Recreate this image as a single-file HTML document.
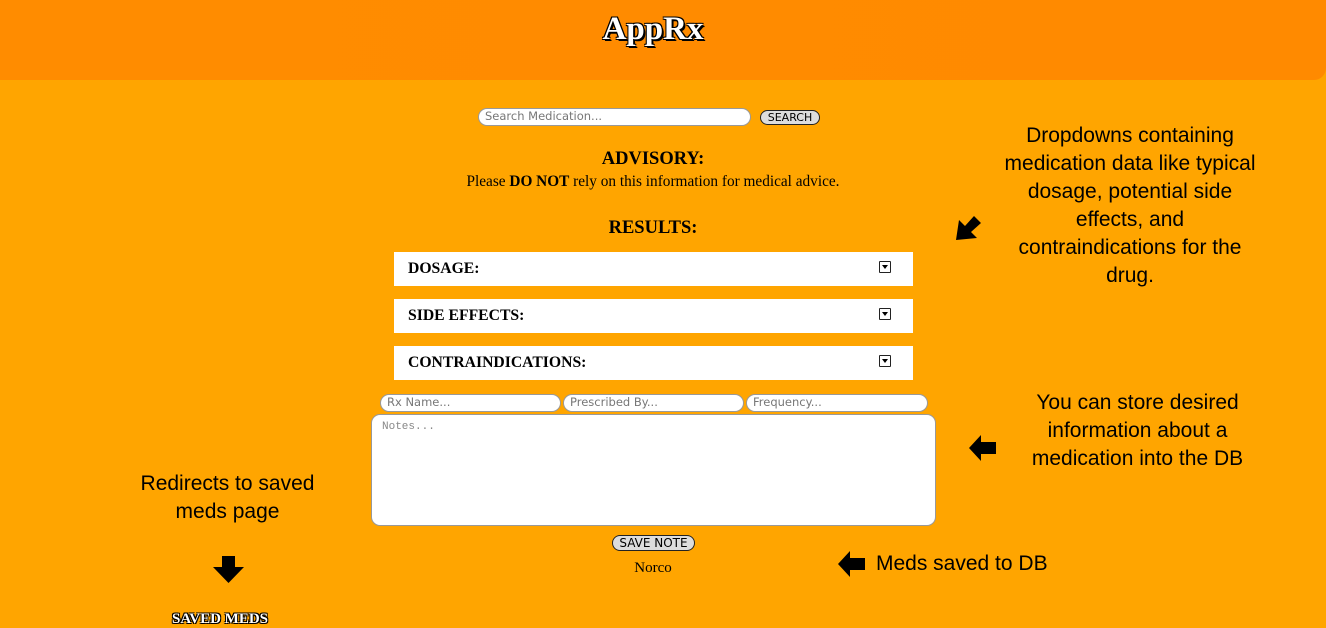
<!DOCTYPE html>
<html><head><style>
body{margin:0;width:1326px;height:624px;background:#ffa500;position:relative;overflow:hidden;font-family:"Liberation Serif",serif}
.hdr{position:absolute;left:0;top:0;width:1326px;height:80px;background:linear-gradient(90deg,#ff8c00,#ff8a00);border-bottom-right-radius:12px}
.hdr h1{margin:0;position:absolute;top:11px;left:0;width:1306px;text-align:center;font-size:33px;font-weight:bold;color:#fff;text-shadow:-1px -1px 0 #000,1px -1px 0 #000,-1px 1px 0 #000,1px 1px 0 #000,2px 2px 0 #000}
.abs{position:absolute}
.inp{position:absolute;background:#fff;border:1px solid #999;border-radius:9px;font-family:"DejaVu Sans",sans-serif;font-size:11.5px;color:#777;box-sizing:border-box;padding-left:6px;line-height:15px}
.btn{position:absolute;background:#ddd;border:1px solid #222;border-radius:9px;font-family:"DejaVu Sans",sans-serif;font-size:11px;text-align:center;box-sizing:border-box;line-height:13px}
.dd{position:absolute;left:394px;width:519px;height:34px;background:#fff;font-weight:bold;font-size:15.7px}
.dd span{position:absolute;left:14px;top:8px}
.dd i{position:absolute;left:485px;top:9px;width:10px;height:10px;border:1.5px solid #222;border-radius:1px}
.dd i:after{content:"";position:absolute;left:2px;top:3px;border-left:3px solid transparent;border-right:3px solid transparent;border-top:4px solid #000}
.note{position:absolute;font-family:"Liberation Sans",sans-serif;font-size:21px;line-height:28px;text-align:center;color:#000;white-space:nowrap}
</style></head><body>
<div class="hdr"><h1>AppRx</h1></div>
<div class="inp" style="left:478px;top:108px;width:273px;height:18px">Search Medication...</div>
<div class="btn" style="left:760px;top:110px;width:60px;height:15px">SEARCH</div>
<div class="abs" style="left:0;width:1306px;top:149px;text-align:center;font-weight:bold;font-size:18.5px">ADVISORY:</div>
<div class="abs" style="left:0;width:1306px;top:173px;text-align:center;font-size:15.3px">Please <b>DO NOT</b> rely on this information for medical advice.</div>
<div class="abs" style="left:0;width:1306px;top:218px;text-align:center;font-weight:bold;font-size:18.5px">RESULTS:</div>
<div class="dd" style="top:252px"><span>DOSAGE:</span><i></i></div>
<div class="dd" style="top:299px"><span>SIDE EFFECTS:</span><i></i></div>
<div class="dd" style="top:346px"><span>CONTRAINDICATIONS:</span><i></i></div>
<div class="inp" style="left:380px;top:394px;width:181px;height:18px">Rx Name...</div>
<div class="inp" style="left:563px;top:394px;width:181px;height:18px">Prescribed By...</div>
<div class="inp" style="left:746px;top:394px;width:182px;height:18px">Frequency...</div>
<div class="inp" style="left:371px;top:414px;width:565px;height:112px;font-family:'Liberation Mono',monospace;font-size:11px;padding:5px 10px;color:#888">Notes...</div>
<div class="btn" style="left:612px;top:535px;width:83px;height:16px;font-size:12px;line-height:14px">SAVE NOTE</div>
<div class="abs" style="left:0;width:1306px;top:560px;text-align:center;font-size:15px">Norco</div>
<div class="abs" style="left:0;width:440px;top:611px;text-align:center;font-weight:bold;font-size:15px;color:#fff;text-shadow:-1px -1px 0 #000,1px -1px 0 #000,-1px 1px 0 #000,1px 1px 0 #000">SAVED MEDS</div>
<div class="note" style="left:990px;width:280px;top:122px">Dropdowns containing<br>medication data like typical<br>dosage, potential side<br>effects, and<br>contraindications for the<br>drug.</div>
<div class="note" style="left:1010px;width:255px;top:389px">You can store desired<br>information about a<br>medication into the DB</div>
<div class="note" style="left:120px;width:215px;top:470px">Redirects to saved<br>meds page</div>
<div class="note" style="left:876px;top:550px;text-align:left">Meds saved to DB</div>
<svg class="abs" style="left:950px;top:208px" width="38" height="38" viewBox="0 0 38 38"><path d="M6 32 L9 12 L15 18 L24 8 L31 15 L21 24 L27 30 Z" fill="#000"/></svg>
<svg class="abs" style="left:968px;top:433px" width="30" height="30" viewBox="0 0 30 30"><path d="M1 15 L13 2 L13 9 L28 9 L28 21 L13 21 L13 28 Z" fill="#000"/></svg>
<svg class="abs" style="left:837px;top:549px" width="30" height="30" viewBox="0 0 30 30"><path d="M1 15 L13 2 L13 9 L28 9 L28 21 L13 21 L13 28 Z" fill="#000"/></svg>
<svg class="abs" style="left:212px;top:555px" width="33" height="30" viewBox="0 0 33 30"><path d="M10 1 L23 1 L23 12 L32 12 L16.5 28 L1 12 L10 12 Z" fill="#000"/></svg>
</body></html>
